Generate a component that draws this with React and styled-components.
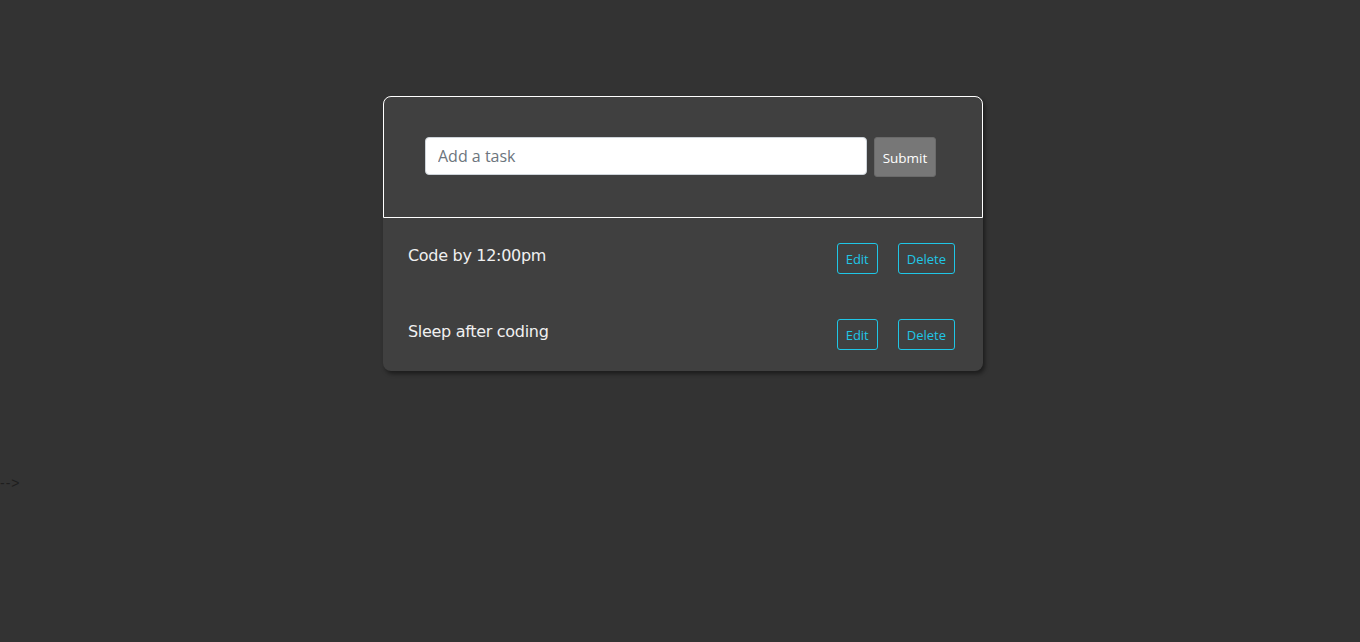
import React, { useState } from "react";
import styled, { createGlobalStyle } from "styled-components";

const GlobalStyle = createGlobalStyle`
  body {
    margin: 0;
    background: #333333;
    font-family: "Open Sans", "Noto Sans", sans-serif;
  }
`;

const Page = styled.div`
  min-height: 642px;
  padding: 96px 0 0 6px;
  box-sizing: border-box;
  position: relative;
`;

const Card = styled.div`
  width: 600px;
  margin: 0 auto;
  background: #404040;
  border-radius: 8px;
  box-shadow: 2px 3px 4px rgba(0, 0, 0, 0.45);
`;

const FormSection = styled.form`
  display: flex;
  align-items: flex-start;
  gap: 7px;
  padding: 40px 46px 40px 41px;
  border: 1px solid #ffffff;
  border-radius: 8px 8px 0 0;
`;

const TaskInput = styled.input`
  flex: 1;
  height: 38px;
  box-sizing: border-box;
  padding: 0 12px;
  border: 1px solid #ced4da;
  border-radius: 4px;
  background: #ffffff;
  font-family: "Open Sans", "Noto Sans", sans-serif;
  font-size: 16px;
  color: #495057;
  outline: none;
  &::placeholder {
    color: #6c757d;
  }
`;

const SubmitButton = styled.button`
  width: 62px;
  height: 40px;
  background: #777777;
  border: 1px solid #6a6a6a;
  border-radius: 3px;
  color: #ffffff;
  font-family: "Open Sans", "Noto Sans", sans-serif;
  font-size: 13.5px;
  padding: 0;
  padding-top: 1px;
`;

const TaskList = styled.ul`
  list-style: none;
  margin: 0;
  padding: 0 0 1px;
`;

const TaskRow = styled.li`
  display: flex;
  align-items: flex-start;
  padding: 25px 28px 20px 25px;
`;

const TaskText = styled.span`
  flex: 1;
  color: #f0f0f0;
  font-family: "DejaVu Sans", "Noto Sans", sans-serif;
  font-size: 16px;
  letter-spacing: -0.3px;
  line-height: 26px;
`;

const Actions = styled.div`
  display: flex;
  gap: 20px;
`;

const OutlineButton = styled.button`
  height: 31px;
  padding: 0 8px;
  background: transparent;
  border: 1px solid #1fc6e6;
  border-radius: 3px;
  color: #1fc6e6;
  font-family: "Open Sans", "Noto Sans", sans-serif;
  font-size: 13px;
`;

const StrayText = styled.div`
  position: absolute;
  left: 0;
  top: 475px;
  color: #1e1e1e;
  font-family: "Liberation Sans", sans-serif;
  font-size: 14px;
  letter-spacing: 1px;
`;

export default function App() {
  const [tasks] = useState(["Code by 12:00pm", "Sleep after coding"]);
  const [value, setValue] = useState("");

  return (
    <>
      <GlobalStyle />
      <Page>
        <Card>
          <FormSection onSubmit={(e) => e.preventDefault()}>
            <TaskInput
              placeholder="Add a task"
              value={value}
              onChange={(e) => setValue(e.target.value)}
            />
            <SubmitButton type="submit">Submit</SubmitButton>
          </FormSection>
          <TaskList>
            {tasks.map((task, i) => (
              <TaskRow key={i}>
                <TaskText>{task}</TaskText>
                <Actions>
                  <OutlineButton>Edit</OutlineButton>
                  <OutlineButton>Delete</OutlineButton>
                </Actions>
              </TaskRow>
            ))}
          </TaskList>
        </Card>
        <StrayText>--&gt;</StrayText>
      </Page>
    </>
  );
}
